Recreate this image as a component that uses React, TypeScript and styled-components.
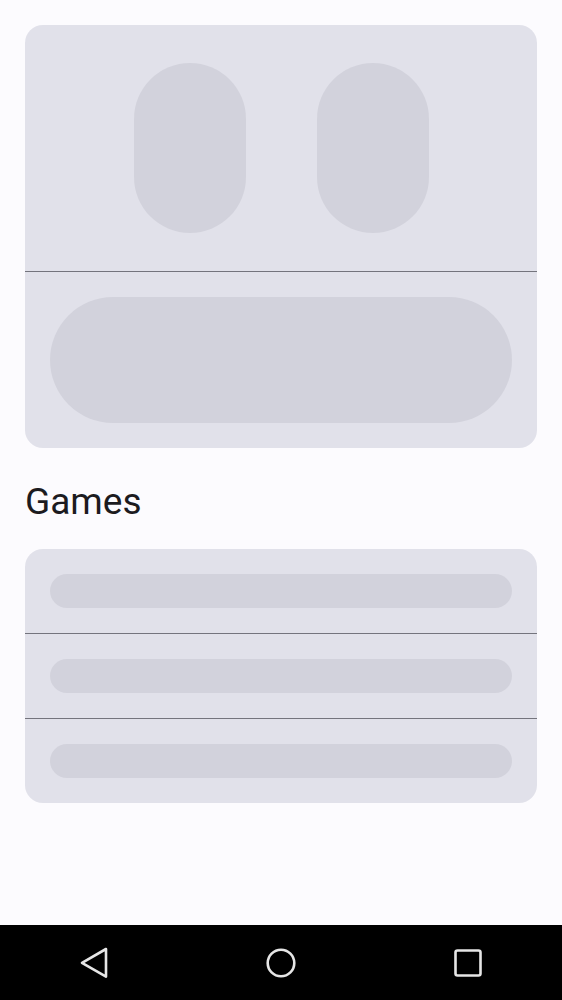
import React from "react";
import styled, { createGlobalStyle } from "styled-components";

const Global = createGlobalStyle`
  html, body { margin: 0; padding: 0; background: #fcfbfe; }
  body { font-family: Roboto, "Noto Sans", sans-serif; }
`;

const Screen = styled.div`
  display: flex;
  flex-direction: column;
  height: 1000px;
  background: #fcfbfe;
`;

const Content = styled.main`
  flex: 1;
  padding: 25px 25px 0;
  display: flex;
  flex-direction: column;
`;

const Card = styled.section`
  background: #e1e1ea;
  border-radius: 18px;
  overflow: hidden;
  display: flex;
  flex-direction: column;
`;

const Divider = styled.div`
  height: 1px;
  background: #74747d;
`;

const TopArea = styled.div`
  height: 246px;
  display: flex;
  align-items: center;
  justify-content: center;
  gap: 71px;
`;

const TallPill = styled.div`
  width: 112px;
  height: 170px;
  border-radius: 56px;
  background: #d2d2dc;
`;

const BottomArea = styled.div`
  padding: 25px;
`;

const WidePill = styled.div<{ $h: number }>`
  height: ${(p) => p.$h}px;
  border-radius: ${(p) => p.$h / 2}px;
  background: #d2d2dc;
`;

const Title = styled.h2`
  margin: 31px 0 25px;
  font-family: Roboto, "Noto Sans", sans-serif;
  font-weight: 400;
  font-size: 37px;
  line-height: 45px;
  color: #1c1b1f;
`;

const Row = styled.div`
  padding: 25px;
  height: 84px;
  box-sizing: border-box;
  display: flex;
  align-items: center;
`;

const RowPill = styled.div`
  flex: 1;
  height: 34px;
  border-radius: 17px;
  background: #d2d2dc;
`;

const NavBar = styled.nav`
  height: 75px;
  background: #000;
  display: grid;
  grid-template-columns: repeat(3, 1fr);
  align-items: center;
  justify-items: center;
`;

const NavSlot = styled.div`
  width: 40px;
  height: 40px;
  display: flex;
  align-items: center;
  justify-content: center;
`;

export default function App() {
  return (
    <>
      <Global />
      <Screen>
        <Content>
          <Card>
            <TopArea>
              <TallPill />
              <TallPill />
            </TopArea>
            <Divider />
            <BottomArea>
              <WidePill $h={126} />
            </BottomArea>
          </Card>
          <Title>Games</Title>
          <Card>
            <Row>
              <RowPill />
            </Row>
            <Divider />
            <Row>
              <RowPill />
            </Row>
            <Divider />
            <Row>
              <RowPill />
            </Row>
          </Card>
        </Content>
        <NavBar>
          <NavSlot>
            <svg width="40" height="40" viewBox="0 0 40 40">
              <path d="M32 6 L8 19.8 L32 33.6 Z" fill="none" stroke="#e6e6e6" strokeWidth="2.6" strokeLinejoin="round" />
            </svg>
          </NavSlot>
          <NavSlot>
            <svg width="40" height="40" viewBox="0 0 40 40">
              <circle cx="20" cy="20" r="13.3" fill="none" stroke="#e6e6e6" strokeWidth="2.6" />
            </svg>
          </NavSlot>
          <NavSlot>
            <svg width="40" height="40" viewBox="0 0 40 40">
              <rect x="7.5" y="7.5" width="25" height="25" rx="2" fill="none" stroke="#e6e6e6" strokeWidth="2.6" />
            </svg>
          </NavSlot>
        </NavBar>
      </Screen>
    </>
  );
}
